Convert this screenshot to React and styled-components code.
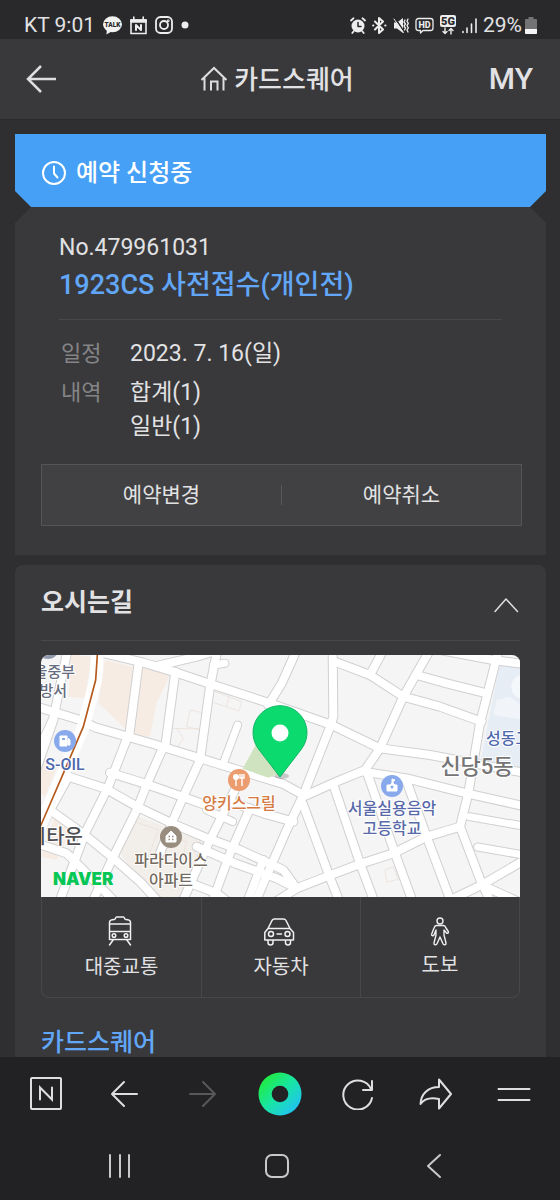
import React from "react";
import styled, { createGlobalStyle } from "styled-components";

const color = {
  page: "#2f2f31",
  status: "#29292b",
  card: "#39393b",
  line: "#48484a",
  text: "#e2e2e4",
  muted: "#858587",
  blue: "#45a0f6",
  link: "#62a6f8",
  dock: "#222224",
};

const GlobalStyle = createGlobalStyle`
  *, *::before, *::after { box-sizing: border-box; }
  body { margin: 0; background: ${color.page}; }
  body, button { font-family: Roboto, "Noto Sans CJK KR", sans-serif; color: ${color.text}; }
  button { border: 0; padding: 0; background: none; cursor: pointer; }
  h1, h2, h3, p, dl, dd, dt { margin: 0; }
  a { color: inherit; text-decoration: none; }
  svg { display: block; flex: none; }
`;

const Screen = styled.div`
  display: flex;
  flex-direction: column;
  height: 100vh;
  background: ${color.page};
`;

const StatusBar = styled.div`
  display: flex;
  justify-content: space-between;
  align-items: center;
  flex: none;
  height: 39px;
  padding: 11px 23px 0 24px;
  background: ${color.status};
  font-size: 21px;
  line-height: 28px;
  white-space: nowrap;
`;

const StatusGroup = styled.div`
  display: flex;
  align-items: center;
  gap: ${(p) => p.$gap}px;
`;

const Header = styled.header`
  display: grid;
  grid-template-columns: 1fr auto 1fr;
  align-items: center;
  flex: none;
  height: 81px;
  padding: 0 27px 0 21px;
  background: ${color.card};
  border-bottom: 1px solid #2a2a2c;
`;

const HeaderButton = styled.button`
  justify-self: ${(p) => p.$side};
  font-size: 30px;
  line-height: 40px;
  font-weight: 500;
`;

const Brand = styled.a`
  display: flex;
  align-items: center;
  gap: 6px;
`;

const BrandName = styled.h1`
  padding-top: 2px;
  font-size: 26px;
  line-height: 36px;
  font-weight: 500;
`;

const Content = styled.main`
  flex: 1;
  min-height: 0;
  overflow-y: auto;
  scrollbar-width: none;
  padding: 14px 14px 0 15px;
`;

const Banner = styled.div`
  display: flex;
  align-items: center;
  gap: 10px;
  height: 73px;
  padding: 4px 27px 0;
  background: ${color.blue};
  color: #fff;
  font-size: 24px;
  line-height: 32px;
  font-weight: 500;
  clip-path: polygon(0 0, 100% 0, 100% calc(100% - 16px), calc(100% - 16px) 100%, 16px 100%, 0 calc(100% - 16px));
`;

const Ticket = styled.section`
  padding: 25px 24px 29px 26px;
  background: ${color.card};
  clip-path: polygon(16px 0, calc(100% - 16px) 0, 100% 16px, 100% 100%, 0 100%, 0 16px);
`;

const TicketInfo = styled.div`
  padding: 0 20px 0 18px;
`;

const TicketNumber = styled.p`
  font-size: 23px;
  line-height: 32px;
`;

const TicketTitle = styled.h2`
  padding-bottom: 12px;
  border-bottom: 1px solid ${color.line};
  color: ${color.link};
  font-size: 27px;
  line-height: 43px;
  font-weight: 500;
`;

const Details = styled.dl`
  display: grid;
  grid-template-columns: 69px 1fr;
  row-gap: 5px;
  padding: 17px 0 20px 2px;
  font-size: 23px;
  line-height: 34px;
`;

const Term = styled.dt`
  color: ${color.muted};
  font-size: 22px;
`;

const Actions = styled.div`
  display: grid;
  grid-template-columns: 1fr 1px 1fr;
  align-items: center;
  height: 62px;
  border: 1px solid #555557;
  background: #414143;
`;

const ActionButton = styled.button`
  height: 60px;
  font-size: 21px;
  line-height: 30px;
`;

const Divider = styled.span`
  height: 20px;
  background: #58585a;
`;

const Place = styled.section`
  margin-top: 10px;
  padding: 0 26px;
  border-radius: 8px 8px 0 0;
  background: ${color.card};
`;

const PlaceHeader = styled.div`
  display: flex;
  justify-content: space-between;
  align-items: center;
  height: 76px;
  border-bottom: 1px solid ${color.line};
`;

const PlaceTitle = styled.h2`
  font-size: 25px;
  line-height: 36px;
  font-weight: 700;
`;

const ToggleButton = styled.button`
  padding-top: 4px;
`;

const MapFrame = styled.div`
  margin-top: 14px;
  border-radius: 8px 8px 0 0;
  overflow: hidden;
  svg { width: 100%; height: auto; }
`;

const MapLabel = styled.text`
  font-family: Roboto, "Noto Sans CJK KR", sans-serif;
  font-size: ${(p) => p.$size || 16}px;
  font-weight: 500;
  fill: ${(p) => p.$tone};
  stroke: #fff;
  stroke-width: 2px;
  stroke-linejoin: round;
  paint-order: stroke;
  text-anchor: ${(p) => p.$anchor || "middle"};
`;

const MapLogo = styled.text`
  font-family: Inter, sans-serif;
  font-size: 17px;
  font-weight: 900;
  fill: #06c755;
`;

const Routes = styled.nav`
  display: grid;
  grid-template-columns: repeat(3, 1fr);
  height: 101px;
  border: 1px solid ${color.line};
  border-top: 0;
  border-radius: 0 0 8px 8px;
`;

const RouteButton = styled.button`
  display: flex;
  flex-direction: column;
  align-items: center;
  padding-top: 17px;
  gap: 4px;
  font-size: 20px;
  line-height: 30px;
  & + & { border-left: 1px solid ${color.line}; }
`;

const PlaceLink = styled.h3`
  padding: 26px 0 20px;
  color: ${color.link};
  font-size: 25px;
  line-height: 38px;
  font-weight: 500;
`;

const BrowserBar = styled.nav`
  display: grid;
  grid-template-columns: repeat(7, 1fr);
  flex: none;
  height: 74px;
  padding: 0 7px;
  background: ${color.dock};
`;

const SystemBar = styled.nav`
  display: grid;
  grid-template-columns: repeat(3, 1fr);
  flex: none;
  height: 69px;
  padding: 0 48px 0 42px;
  background: ${color.dock};
`;

const DockButton = styled.button`
  display: flex;
  align-items: center;
  justify-content: center;
  &:disabled { cursor: default; }
`;

function Icon({ w, h = w, sw = 2, stroke = "#dededf", children }) {
  return (
    <svg width={w} height={h} viewBox={`0 0 ${w} ${h}`} fill="none" stroke={stroke} strokeWidth={sw}
      strokeLinecap="round" strokeLinejoin="round" aria-hidden="true">
      {children}
    </svg>
  );
}

function NotificationIcons() {
  return (
    <>
      <Icon w={19} h={19} stroke="none">
        <ellipse cx="9.5" cy="8.3" rx="9.5" ry="8" fill="#f2f2f2" />
        <path d="M4 13l-.6 5.400 6-3.400z" fill="#f2f2f2" />
        <text x="9.500" y="10.600" fontSize="6.500" fontWeight="900" textAnchor="middle" fill="#29292b">TALK</text>
      </Icon>
      <Icon w={17} h={19} sw={1.600} stroke="#ededed">
        <path d="M1 4h15v13.500H1z" strokeLinejoin="miter" />
        <path d="M1 4h15v2H1z" fill="#ededed" />
        <path d="M3.800 1v3M13.200 1v3" />
        <path d="M6 14V9l5 5V9" strokeWidth="2" />
      </Icon>
      <Icon w={18} h={18} sw={1.800} stroke="#ededed">
        <rect x="1" y="1" width="16" height="16" rx="4.500" />
        <circle cx="9" cy="9" r="4" />
        <circle cx="13.200" cy="4.800" r=".5" />
      </Icon>
    </>
  );
}

function SystemIcons() {
  return (
    <>
      <Icon w={16} h={17} sw={1.800} stroke="#ededed">
        <circle cx="8" cy="9" r="6.500" fill="#ededed" stroke="none" />
        <path d="M1 3.500l2.500-2.200M15 3.500l-2.500-2.200M3.500 14.500L2.300 16M12.500 14.500l1.200 1.500" />
        <path d="M8 5.500V9.500h3" stroke="#29292b" strokeWidth="1.500" />
      </Icon>
      <Icon w={15} h={17} sw={2} stroke="#ededed">
        <path d="M3 4.500l8 8-4 3.500V1l4 3.500-8 8" />
        <path d="M1.200 8.500h.1M13.300 8.500h.1" strokeWidth="2.200" />
      </Icon>
      <Icon w={16} h={17} sw={1.600} stroke="#ededed">
        <path d="M1 5.500h3L10 1v15l-6-4.500H1z" fill="#ededed" stroke="none" />
        <path d="M2 1l9 13.500" stroke="#29292b" strokeWidth="1.400" />
        <path d="M1 2l9.500 13.500" strokeWidth="1" />
        <path d="M12 3l-1 2 1.500 2-1.500 2 1.500 2-1 2M15 2l-1 2.200 1.300 2.200L14 8.600l1.300 2.200L14 13l1 2" strokeWidth="1.300" />
      </Icon>
      <Icon w={19} h={17} sw={1.300} stroke="#ededed">
        <path d="M3.500 1.500h12a2.500 2.500 0 0 1 2.500 2.500v7a2.500 2.500 0 0 1-2.500 2.500H8l-2.500 2.500v-2.500h-2A2.500 2.500 0 0 1 1 11V4a2.500 2.500 0 0 1 2.500-2.500z" />
        <text x="9.500" y="11" fontSize="9" fontWeight="800" textAnchor="middle" fill="#ededed" stroke="none">HD</text>
      </Icon>
      <Icon w={16} h={22} sw={1.400} stroke="#ededed">
        <rect x="0" y="1" width="16" height="12" rx="2" fill="#ededed" stroke="none" />
        <text x="8" y="11" fontSize="11" fontWeight="900" textAnchor="middle" fill="#29292b" stroke="none">5G</text>
        <path d="M5 14v5M3 17.500l2 2 2-2M11 20v-5M9 16.500l2-2 2 2" />
      </Icon>
      <Icon w={15} h={17} sw={1.600} stroke="#ededed">
        <path d="M1 14.500v1M5 11v4.500M9.500 7v8.500M14 2v13.500" />
      </Icon>
    </>
  );
}

const streets = [
  "M115 20L70 235L20 345",
  "M20 200L150 240L195 262L370 312L520 358L640 395L760 432L820 465",
  "M215 38L340 68L440 98L550 135L720 190L905 255L1050 325L1200 345L1480 398",
  "M380 78L500 50L565 30",
  "M326 68L298 285", "M436 95L405 325", "M562 30L540 140L510 360",
  "M20 385L70 240",
  "M115 410L225 445L325 502L430 552L520 590L630 630L760 690L800 745",
  "M240 398L355 434L462 472L540 500",
  "M295 285L235 440L165 580L90 780",
  "M398 325L350 434L320 510L250 650L185 790",
  "M510 360L460 470L425 550L390 640",
  "M640 395L600 480L535 610L455 790",
  "M60 510L165 585L250 655L330 725L390 790",
  "M115 410L60 510L20 590",
  "M20 610L110 640L250 780",
  "M500 620L620 672L740 715L800 745",
  "M470 725L560 760L600 790",
  "M660 505L600 640L545 790", "M700 660L650 790",
  "M600 485L700 520L790 545",
  "M715 195L755 130L800 30",
  "M908 30L910 230L900 262L865 350L820 465L770 570L700 730L675 790",
  "M915 65L1020 105L1120 170L1230 200L1355 245",
  "M1060 30L1020 105", "M1200 30L1160 100L1120 170L1050 325L1005 390L920 425L820 470",
  "M1160 105L1250 130L1370 160", "M1230 30L1390 60L1480 72",
  "M1406 30L1350 250L1315 460L1290 560L1355 730L1390 800",
  "M1000 395L1130 415L1310 460L1480 498",
  "M818 490L895 700L930 790", "M912 440L990 670L1035 790",
  "M1012 400L1095 640L1150 790", "M1130 425L1190 590L1265 790",
  "M1290 560L1190 590L1090 640L990 672L900 706L800 745L730 790",
  "M1355 735L1480 662", "M1355 735L1480 792", "M1355 735L1240 790",
];

const lanes = ["M623 255L580 370", "M550 75L585 70", "M530 510L608 545", "M1318 530L1480 558", "M1343 621L1480 645"];

function Streets({ stroke, wide, narrow }) {
  return (
    <g fill="none" stroke={stroke} strokeLinejoin="round" strokeLinecap="round">
      {streets.map((d) => <path key={d} d={d} strokeWidth={wide} />)}
      {lanes.map((d) => <path key={d} d={d} strokeWidth={narrow} />)}
    </g>
  );
}

function DirectionsMap() {
  return (
    <svg viewBox="0 0 479 242" role="img" aria-label="카드스퀘어 지도">
      <g transform="translate(-11 -15) scale(0.33333)">
        <path d="M0 0h1500v800H0z" fill="#f5f5f5" />
        <g fill="#f7ece4">
          <path d="M125 45L185 50L165 175L115 170z" />
          <path d="M225 60L310 80L290 270L205 190z" />
          <path d="M335 80L420 105L380 190L360 290L300 285z" />
          <path d="M33 350L85 370L45 470L33 460z" />
          <path d="M75 525L130 560L80 660L33 650z" />
        </g>
        <path d="M325 530L520 600L460 771L360 771L265 630z" fill="#f2efea" />
        <path d="M1410 70L1480 85L1480 390L1350 370z" fill="#e6edf5" />
        <circle cx="1480" cy="140" r="36" fill="#f4f8fb" />
        <path d="M1400 180L1440 170L1480 200V240L1390 225z" fill="#f1f5f9" />
        <g fill="none" stroke="#e9ddd4" strokeWidth="2">
          <path d="M480 210l45 10-10 50-45-10zM425 265l85 2M440 265l20 30-20 30M555 155l80 30-8 28-75-25M600 165l-12 35M1065 690l25-10 15 38-35 8zM315 545l70 25-30 80M400 590l70 15-10 40" />
        </g>
        <Streets stroke="#d0d0d1" wide={30} narrow={27} />
        <Streets stroke="#fff" wide={24} narrow={21} />
        <path d="M680 310L750 400L715 413L638 386z" fill="#cfe3c0" />
        <path d="M203 30L197 120L160 260L100 400L20 585" fill="none" stroke="#fff" strokeWidth="38" />
        <path d="M203 30L197 120L160 260L100 400L20 585" fill="none" stroke="#b5591c" strokeWidth="5" />
      </g>

      <circle cx="7" cy="-7" r="11" fill="#9299ad" />
      <MapLabel x="34" y="22" $size={15} $anchor="end" $tone="#666d80">울중부</MapLabel>
      <MapLabel x="26" y="41" $size={15} $anchor="end" $tone="#666d80">방서</MapLabel>

      <circle cx="24" cy="86" r="11" fill="#88a9ec" />
      <path d="M19 81h7v10h-7zM27 83l2 2v5h-2v-3h-1" fill="#fff" stroke="#fff" strokeWidth="1" />
      <path d="M21 83h3v2h-3z" fill="#88a9ec" />
      <MapLabel x="24" y="115" $tone="#4d68ad">S-OIL</MapLabel>

      <circle cx="198" cy="125" r="11" fill="#eb9d70" />
      <path d="M195 123v8M201 123v8M199 119v4h4v-4M201 119v4" fill="none" stroke="#fff" strokeWidth="1.400" />
      <circle cx="195" cy="122" r="3" fill="#fff" />
      <MapLabel x="198" y="154" $tone="#d47a42">양키스그릴</MapLabel>

      <circle cx="130" cy="182" r="11" fill="#998d80" />
      <path d="M125 181l5-5 5 5v6h-10z" fill="#fff" stroke="#fff" strokeLinejoin="round" />
      <path d="M127.500 181.500h1.500M131 181.500h1.500M127.500 184.500h1.500M131 184.500h1.500" stroke="#998d80" strokeWidth="1.500" />
      <MapLabel x="130" y="211" $tone="#746a60">파라다이스</MapLabel>
      <MapLabel x="130" y="231" $tone="#746a60">아파트</MapLabel>

      <circle cx="351" cy="131" r="11" fill="#88a9ec" />
      <path d="M346 130h3l2-2v-4l3 1-2 2v1l2 2h2v6h-10z" fill="#fff" stroke="#fff" strokeLinejoin="round" />
      <circle cx="351" cy="132" r="1.500" fill="#88a9ec" />
      <MapLabel x="351" y="159" $tone="#5769a8">서울실용음악</MapLabel>
      <MapLabel x="351" y="179" $tone="#5769a8">고등학교</MapLabel>

      <MapLabel x="445" y="89" $anchor="start" $tone="#4d68ad">성동고</MapLabel>
      <MapLabel x="436" y="119" $size={22} $tone="#747476">신당5동</MapLabel>
      <MapLabel x="42" y="189" $size={20} $anchor="end" $tone="#505052">시타운</MapLabel>
      <MapLogo x="12" y="230">NAVER</MapLogo>

      <ellipse cx="241" cy="121" rx="7" ry="3" fill="#000" opacity=".18" />
      <path d="M239 122L217.500 94A27 27 0 1 1 260.500 94z" fill="#0bdb6e" stroke="#12b565" strokeWidth="1" />
      <circle cx="239" cy="78" r="8.500" fill="#fff" />
    </svg>
  );
}

const routes = [
  {
    label: "대중교통",
    icon: (
      <Icon w={34} h={34} sw={1.500} stroke="#f0f0f0">
        <path d="M4.500 25.500V8.500c0-2 2-3 5-3 1 0 1-2.500 2-2.500h7c1 0 1 2.500 2 2.500 3 0 5 1 5 3v17zM4.500 10h21M4.500 17.500h21M8.500 25.500L4.500 31M21.500 25.500l4 5.500" />
        <circle cx="9" cy="21.500" r="1.800" /><circle cx="21" cy="21.500" r="1.800" />
      </Icon>
    ),
  },
  {
    label: "자동차",
    icon: (
      <Icon w={34} h={34} sw={1.500} stroke="#f0f0f0">
        <path d="M4 14.500l4-8c.6-1 1-1.500 2.500-1.500h9c1.500 0 2 .5 2.500 1.500l4 8M4 14.500h22l3.500 4v7.500H.800v-7.500zM4 26v2.500a2 2 0 0 0 5 0V26M21.500 26v2.500a2 2 0 0 0 5 0V26M13 20h4.500" />
        <circle cx="7" cy="20" r="2.500" /><circle cx="23.500" cy="20" r="2.500" />
      </Icon>
    ),
  },
  {
    label: "도보",
    icon: (
      <Icon w={34} h={32} sw={1.400} stroke="#f0f0f0">
        <circle cx="17" cy="7" r="3" />
        <path d="M13.500 11.500h7c1.500 0 2 1 2.500 2.500l2.300 3.500c.7 1.500-1 2.500-2 1.200L21 16v5l2 8c.3 2-2.300 2.500-3 .8L17 23l-3 6.800c-.7 1.700-3.300 1.200-3-.8l2-8v-5l-2 5c-1 1.500-3 .5-2.300-1l2.300-6c.5-1.500 1-2.500 2.500-2.500z" />
      </Icon>
    ),
  },
];

const dock = [
  {
    label: "네이버 홈",
    icon: (
      <Icon w={34}><rect x="2" y="1" width="30" height="31" rx="1" /><path d="M11 22.500V10.500l12 12V10.500" strokeLinejoin="miter" /></Icon>
    ),
  },
  { label: "뒤로", icon: <Icon w={28}><path d="M27 14H2M14 2L2 14l12 12" /></Icon> },
  { label: "앞으로", disabled: true, icon: <Icon w={28} stroke="#58585a"><path d="M2 14h25M15 2l12 12-12 12" /></Icon> },
  {
    label: "그린닷",
    icon: (
      <Icon w={44}>
        <defs>
          <linearGradient id="greenDot" x1="0" y1="0" x2="1" y2="1">
            <stop offset=".15" stopColor="#1fec46" />
            <stop offset=".5" stopColor="#19e5a5" />
            <stop offset=".85" stopColor="#20c5ee" />
          </linearGradient>
        </defs>
        <circle cx="22" cy="22" r="21.500" fill="url(#greenDot)" stroke="none" />
        <circle cx="22" cy="22" r="8.300" fill={color.dock} stroke="none" />
      </Icon>
    ),
  },
  { label: "새로고침", icon: <Icon w={32}><path d="M30 20A14.500 14.500 0 1 1 29 11M30 3v9H21" /></Icon> },
  { label: "공유", icon: <Icon w={34}><path d="M20 10V2.500L32 17 20 31.500V22C11 20 5 22 1.500 27 2 17 9 10 20 10z" /></Icon> },
  { label: "메뉴", icon: <Icon w={34}><path d="M1.500 12h31M1.500 23h31" /></Icon> },
];

export default function App() {
  return (
    <Screen>
      <GlobalStyle />
      <StatusBar>
        <StatusGroup $gap={8}>
          <span>KT 9:01</span>
          <NotificationIcons />
          <Icon w={12} h={18} stroke="none"><circle cx="4" cy="9" r="3.500" fill="#ededed" /></Icon>
        </StatusGroup>
        <StatusGroup $gap={6}>
          <SystemIcons />
          <StatusGroup $gap={3}>
            <span>29%</span>
            <Icon w={12} h={17} stroke="none">
              <path d="M3.500 0h5v2H11a1 1 0 0 1 1 1v13a1 1 0 0 1-1 1H1a1 1 0 0 1-1-1V3a1 1 0 0 1 1-1h2.500z" fill="#737375" />
              <path d="M0 12h12v4a1 1 0 0 1-1 1H1a1 1 0 0 1-1-1z" fill="#f5f5f5" />
            </Icon>
          </StatusGroup>
        </StatusGroup>
      </StatusBar>

      <Header>
        <HeaderButton $side="start" aria-label="뒤로">
          <Icon w={36} h={28} sw={2.500}><path d="M35 14H7M20 1L7 14l13 13" strokeLinecap="butt" strokeLinejoin="miter" /></Icon>
        </HeaderButton>
        <Brand href="#home">
          <Icon w={28} h={26}>
            <path d="M1.500 14L14 2l12.500 12M4.500 12v12.500M23.500 12v12.500M11 24.500V15.500h6.500v9" strokeLinecap="butt" strokeLinejoin="miter" />
          </Icon>
          <BrandName>카드스퀘어</BrandName>
        </Brand>
        <HeaderButton $side="end">MY</HeaderButton>
      </Header>

      <Content>
        <Banner>
          <Icon w={24} sw={2} stroke="#fff"><circle cx="12" cy="12" r="11" /><path d="M12 5.500v7l3.500 4" /></Icon>
          <span>예약 신청중</span>
        </Banner>
        <Ticket>
          <TicketInfo>
            <TicketNumber>No.479961031</TicketNumber>
            <TicketTitle>1923CS 사전접수(개인전)</TicketTitle>
            <Details>
              <Term>일정</Term>
              <dd>2023. 7. 16(일)</dd>
              <Term>내역</Term>
              <dd>합계(1)<br />일반(1)</dd>
            </Details>
          </TicketInfo>
          <Actions>
            <ActionButton>예약변경</ActionButton>
            <Divider />
            <ActionButton>예약취소</ActionButton>
          </Actions>
        </Ticket>

        <Place>
          <PlaceHeader>
            <PlaceTitle>오시는길</PlaceTitle>
            <ToggleButton aria-label="접기" aria-expanded="true">
              <Icon w={26} h={16} sw={1.500}><path d="M1 14.500L12 2l11.500 12.500" /></Icon>
            </ToggleButton>
          </PlaceHeader>
          <MapFrame><DirectionsMap /></MapFrame>
          <Routes aria-label="길찾기">
            {routes.map((r) => (
              <RouteButton key={r.label}>{r.icon}<span>{r.label}</span></RouteButton>
            ))}
          </Routes>
          <PlaceLink><a href="#place">카드스퀘어</a></PlaceLink>
        </Place>
      </Content>

      <BrowserBar aria-label="브라우저">
        {dock.map((d) => (
          <DockButton key={d.label} aria-label={d.label} disabled={d.disabled}>{d.icon}</DockButton>
        ))}
      </BrowserBar>
      <SystemBar aria-label="시스템">
        <DockButton aria-label="최근 앱"><Icon w={26} stroke="#c9c9ca"><path d="M3 2v22M13 2v22M22 2v22" /></Icon></DockButton>
        <DockButton aria-label="홈"><Icon w={26} stroke="#c9c9ca"><rect x="2" y="2" width="22" height="22" rx="6" /></Icon></DockButton>
        <DockButton aria-label="이전"><Icon w={26} stroke="#c9c9ca"><path d="M19 2L7 13l12 11" /></Icon></DockButton>
      </SystemBar>
    </Screen>
  );
}
